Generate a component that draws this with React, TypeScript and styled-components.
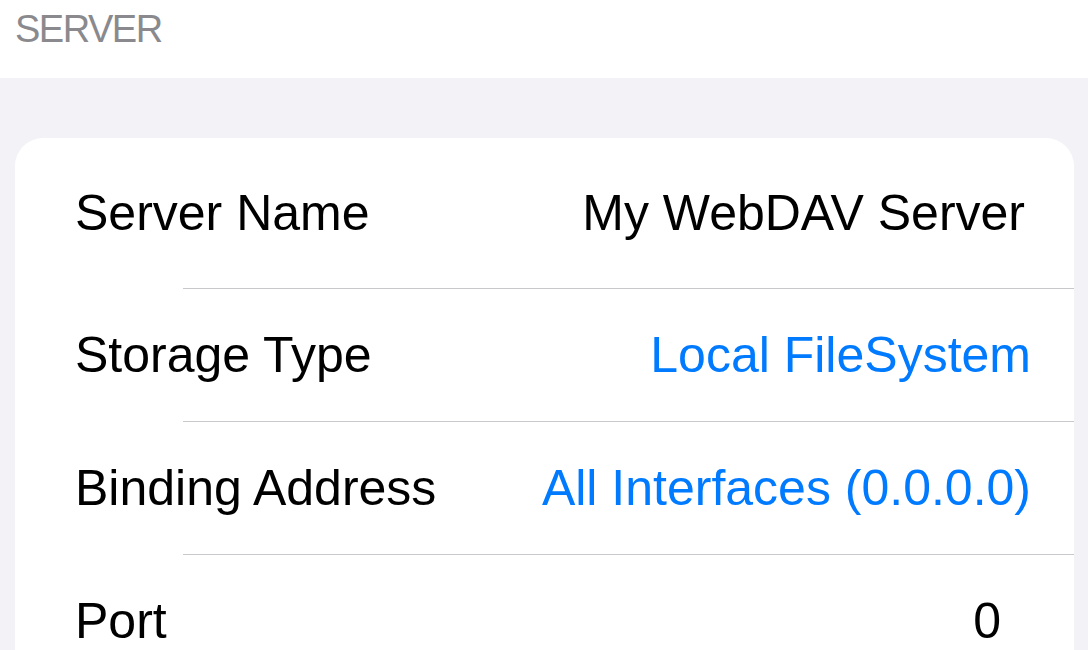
import React from 'react'
import styled, { createGlobalStyle } from 'styled-components'

const GlobalStyle = createGlobalStyle`
  html, body {
    margin: 0;
    padding: 0;
    background: #f2f2f7;
    font-family: 'Liberation Sans', Arial, sans-serif;
    overflow: hidden;
  }
`

const Page = styled.div`
  width: 1088px;
  height: 650px;
  overflow: hidden;
  background: #f2f2f7;
`

const Header = styled.div`
  height: 78px;
  box-sizing: border-box;
  background: #ffffff;
  padding: 10px 0 0 15px;
`

const HeaderTitle = styled.div`
  font-size: 38px;
  line-height: 38px;
  letter-spacing: -1.5px;
  color: #8a8a8e;
`

const Card = styled.div`
  margin: 60px 14px 0 15px;
  background: #ffffff;
  border-radius: 28px 28px 0 0;
`

const Row = styled.div<{ $tall?: boolean }>`
  display: flex;
  align-items: center;
  justify-content: space-between;
  height: ${({ $tall }) => ($tall ? '150px' : '132px')};
  padding: 0 43px 0 60px;
`

const Label = styled.span`
  font-size: 50px;
  line-height: 50px;
  color: #000000;
`

const Value = styled.span<{ $link?: boolean; $inset?: number }>`
  font-size: 50px;
  line-height: 50px;
  color: ${({ $link }) => ($link ? '#007aff' : '#000000')};
  margin-right: ${({ $inset }) => $inset ?? 0}px;
`

const Separator = styled.div`
  height: 1px;
  margin-left: 168px;
  background: #c8c7cc;
`

export default function App() {
  return (
    <Page>
      <GlobalStyle />
      <Header>
        <HeaderTitle>SERVER</HeaderTitle>
      </Header>
      <Card>
        <Row $tall>
          <Label>Server Name</Label>
          <Value $inset={6}>My WebDAV Server</Value>
        </Row>
        <Separator />
        <Row>
          <Label>Storage Type</Label>
          <Value $link>Local FileSystem</Value>
        </Row>
        <Separator />
        <Row>
          <Label>Binding Address</Label>
          <Value $link>All Interfaces (0.0.0.0)</Value>
        </Row>
        <Separator />
        <Row>
          <Label>Port</Label>
          <Value $inset={30}>0</Value>
        </Row>
      </Card>
    </Page>
  )
}
